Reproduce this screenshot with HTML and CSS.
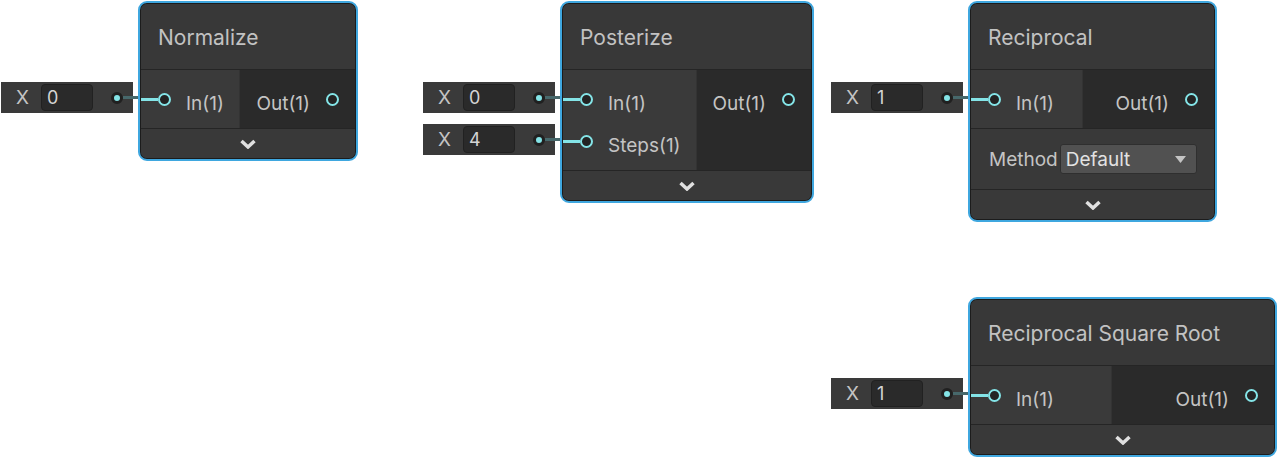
FILE: index.html
```html
<!DOCTYPE html>
<html>
<head>
<meta charset="utf-8">
<title>Shader Graph Nodes</title>
<link rel="stylesheet" href="styles.css">
</head>
<body>
<div class="canvas">

  <div class="group g-normalize">
    <div class="widgets">
      <div class="widget"><span class="wlabel">X</span><span class="field">0</span><span class="dot"></span><span class="wire"></span></div>
    </div>
    <div class="node w-normalize">
      <div class="inner">
        <div class="title">Normalize</div>
        <div class="ports">
          <div class="inputs in-normalize">
            <div class="port in"><span class="link"></span><span class="circle"></span><span class="plabel">In(1)</span></div>
          </div>
          <div class="outputs">
            <div class="port out"><span class="plabel">Out(1)</span><span class="circle"></span></div>
          </div>
        </div>
        <div class="collapse"><svg class="chev" width="18" height="10" viewBox="0 0 18 10"><path d="M2.5 2 L9 8 L15.5 2" fill="none" stroke="#e0e0e0" stroke-width="3.5"/></svg></div>
      </div>
    </div>
  </div>

  <div class="group g-posterize">
    <div class="widgets">
      <div class="widget"><span class="wlabel">X</span><span class="field">0</span><span class="dot"></span><span class="wire"></span></div>
      <div class="widget"><span class="wlabel">X</span><span class="field">4</span><span class="dot"></span><span class="wire"></span></div>
    </div>
    <div class="node w-posterize">
      <div class="inner">
        <div class="title">Posterize</div>
        <div class="ports">
          <div class="inputs in-posterize">
            <div class="port in"><span class="link"></span><span class="circle"></span><span class="plabel">In(1)</span></div>
            <div class="port in"><span class="link"></span><span class="circle"></span><span class="plabel">Steps(1)</span></div>
          </div>
          <div class="outputs">
            <div class="port out"><span class="plabel">Out(1)</span><span class="circle"></span></div>
          </div>
        </div>
        <div class="collapse"><svg class="chev" width="18" height="10" viewBox="0 0 18 10"><path d="M2.5 2 L9 8 L15.5 2" fill="none" stroke="#e0e0e0" stroke-width="3.5"/></svg></div>
      </div>
    </div>
  </div>

  <div class="group g-reciprocal">
    <div class="widgets">
      <div class="widget"><span class="wlabel">X</span><span class="field">1</span><span class="dot"></span><span class="wire"></span></div>
    </div>
    <div class="node w-reciprocal">
      <div class="inner">
        <div class="title">Reciprocal</div>
        <div class="ports">
          <div class="inputs in-reciprocal">
            <div class="port in"><span class="link"></span><span class="circle"></span><span class="plabel">In(1)</span></div>
          </div>
          <div class="outputs">
            <div class="port out"><span class="plabel">Out(1)</span><span class="circle"></span></div>
          </div>
        </div>
        <div class="setting">
          <span class="slabel">Method</span>
          <div class="dropdown"><span>Default</span><svg width="11" height="7" viewBox="0 0 11 7"><path d="M0 0 H11 L5.5 7 Z" fill="#c4c4c4"/></svg></div>
        </div>
        <div class="collapse"><svg class="chev" width="18" height="10" viewBox="0 0 18 10"><path d="M2.5 2 L9 8 L15.5 2" fill="none" stroke="#e0e0e0" stroke-width="3.5"/></svg></div>
      </div>
    </div>
  </div>

  <div class="group g-rsqrt">
    <div class="widgets">
      <div class="widget"><span class="wlabel">X</span><span class="field">1</span><span class="dot"></span><span class="wire"></span></div>
    </div>
    <div class="node w-rsqrt">
      <div class="inner">
        <div class="title">Reciprocal Square Root</div>
        <div class="ports">
          <div class="inputs in-rsqrt">
            <div class="port in"><span class="link"></span><span class="circle"></span><span class="plabel">In(1)</span></div>
          </div>
          <div class="outputs">
            <div class="port out"><span class="plabel">Out(1)</span><span class="circle"></span></div>
          </div>
        </div>
        <div class="collapse"><svg class="chev" width="18" height="10" viewBox="0 0 18 10"><path d="M2.5 2 L9 8 L15.5 2" fill="none" stroke="#e0e0e0" stroke-width="3.5"/></svg></div>
      </div>
    </div>
  </div>

</div>
</body>
</html>
```

FILE: styles.css
```css
* { box-sizing: border-box; }

html, body {
  margin: 0;
  padding: 0;
  background: #ffffff;
}

body {
  font-family: Inter, "Noto Sans", sans-serif;
  color: #c4c4c4;
}

.canvas {
  position: relative;
  width: 1277px;
  height: 459px;
  overflow: hidden;
}

/* node groups placed on the graph canvas */
.group {
  position: absolute;
  display: flex;
  align-items: flex-start;
}
.g-normalize { left: 1px; top: 1px; }
.g-posterize { left: 423px; top: 1px; }
.g-reciprocal { left: 831px; top: 1px; }
.g-rsqrt { left: 831px; top: 297px; }

/* inline input widgets */
.widgets {
  width: 132px;
  margin-right: 5px;
  padding-top: 81px;
  display: flex;
  flex-direction: column;
  gap: 11px;
}

.widget {
  width: 132px;
  height: 31px;
  background: #3a3a3a;
  display: flex;
  align-items: center;
  padding-left: 15px;
  font-size: 19px;
}

.wlabel {
  color: #c4c4c4;
  width: 13px;
}

.field {
  margin-left: 12px;
  width: 52px;
  height: 27px;
  background: #2a2a2a;
  border: 1px solid #212121;
  border-radius: 4px;
  padding-left: 5px;
  font-size: 18px;
  line-height: 25px;
  color: #d4d4d4;
}

.dot {
  margin-left: auto;
  width: 12px;
  height: 12px;
  border-radius: 50%;
  border: 3px solid #202020;
  background: #84e4e7;
}

.wire {
  width: 15px;
  height: 3px;
  margin-right: -5px;
  background: #47686b;
}

/* node */
.node {
  border: 2px solid #3fa7df;
  border-radius: 9px;
  background: #1c1c1c;
  padding: 1px;
}
.w-normalize { width: 220px; }
.w-posterize { width: 254px; }
.w-reciprocal { width: 249px; }
.w-rsqrt { width: 309px; }

.inner {
  border-radius: 6px;
  overflow: hidden;
  background: #393939;
}

.title {
  height: 66px;
  border-bottom: 1px solid #252525;
  background: #383838;
  display: flex;
  align-items: center;
  padding: 2px 0 0 17px;
  font-size: 21px;
  color: #c2c2c2;
}

.ports {
  display: flex;
}

.inputs {
  background: #3a3a3a;
  padding: 8px 0 8px 0;
  border-right: 1px solid #333;
}
.in-normalize { width: 99px; }
.in-posterize { width: 134px; }
.in-reciprocal { width: 112px; }
.in-rsqrt { width: 141px; }

.outputs {
  flex: 1;
  background: #2a2a2a;
  padding: 8px 0 8px 0;
}

.port {
  height: 42px;
  display: flex;
  align-items: center;
  font-size: 19px;
  white-space: nowrap;
}

.link {
  width: 17px;
  height: 3px;
  background: #84e4e7;
}

.circle {
  width: 13px;
  height: 13px;
  border-radius: 50%;
  border: 2px solid #84e4e7;
  background: #232323;
  flex: none;
}

.plabel {
  padding-top: 8px;
  color: #c4c4c4;
}

.port.in .plabel { margin-left: 15px; }

.port.out {
  justify-content: flex-end;
  padding-right: 16px;
}
.port.out .plabel { margin-right: 16px; }

/* settings row */
.setting {
  height: 61px;
  border-top: 1px solid #252525;
  background: #393939;
  display: flex;
  align-items: center;
  padding: 0 17px 0 18px;
  font-size: 19px;
}

.slabel { color: #c4c4c4; }

.dropdown {
  margin-left: 2px;
  flex: 1;
  height: 30px;
  background: #515151;
  border: 1px solid #2f2f2f;
  border-radius: 3px;
  display: flex;
  align-items: center;
  justify-content: space-between;
  padding: 0 10px 0 5px;
  color: #e2e2e2;
}

/* collapse bar */
.collapse {
  height: 30px;
  border-top: 1px solid #252525;
  background: #393939;
  display: flex;
  align-items: center;
  justify-content: center;
}

.chev { display: block; }
```
